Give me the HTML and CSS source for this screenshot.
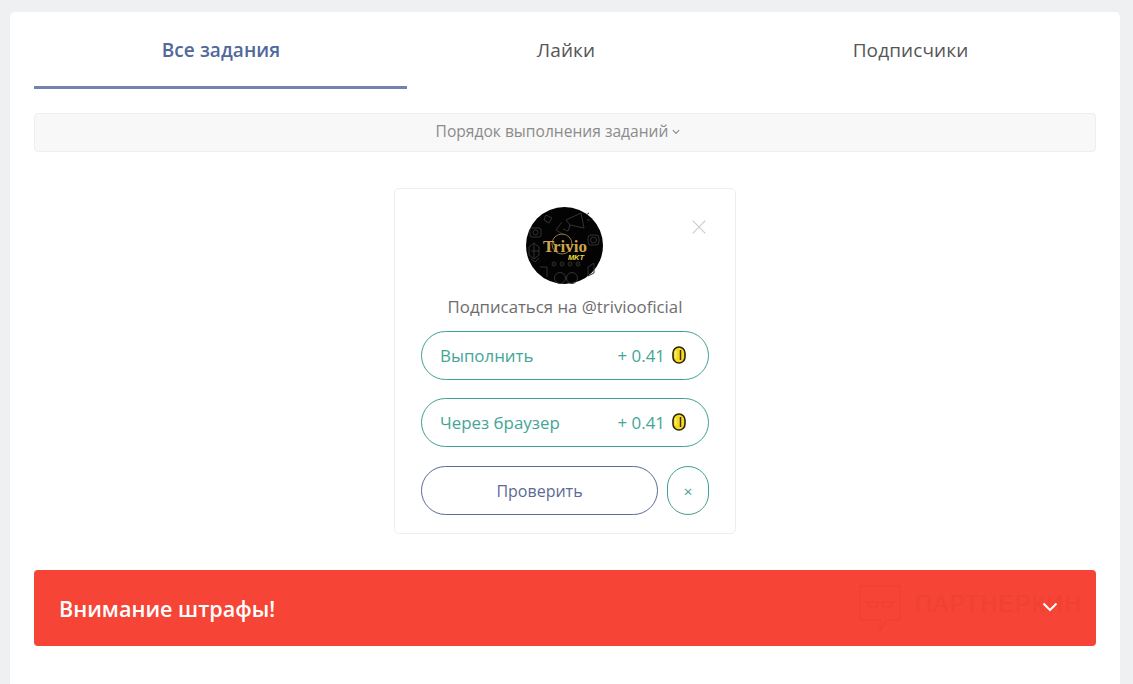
FILE: index.html
```
<!DOCTYPE html>
<html lang="ru">
<head>
<meta charset="utf-8">
<title>Задания</title>
<link rel="stylesheet" href="styles.css">
</head>
<body>
<main class="panel">
  <nav class="tabs">
    <a class="tab tab-active">Все задания</a>
    <a class="tab">Лайки</a>
    <a class="tab">Подписчики</a>
  </nav>
  <div class="order-bar">
    <span>Порядок выполнения заданий</span>
    <svg class="order-chevron" viewBox="0 0 8 6" width="8" height="6"><path d="M.8 1.2 4 4.4l3.2-3.2" fill="none" stroke="#8b8b8b" stroke-width="1.1"/></svg>
  </div>
  <section class="task-wrap">
    <article class="task">
      <button class="task-close" aria-label="Закрыть">
        <svg viewBox="0 0 14 14" width="14" height="14"><path d="M.7.7l12.6 12.6M13.3.7.7 13.3" stroke="#c9cdd0" stroke-width="1.2" fill="none"/></svg>
      </button>
      <svg class="avatar" viewBox="0 0 77 77" width="77" height="77">
        <circle cx="38.5" cy="38.5" r="38.5" fill="#030303"/>
        <g fill="none" stroke="#333" stroke-width="1">
          <path d="M40 13l15-7 3 15-14-3zM44 18l-2 6-5-2M36 15l-6 8 8 5M60 8l3-2M61 13h3"/>
          <rect x="4" y="21" width="11" height="9" rx="2"/>
          <circle cx="9.500" cy="25.500" r="2.500"/>
          <rect x="62" y="28" width="11" height="10" rx="3"/>
          <circle cx="67.500" cy="33" r="3"/>
          <path d="M3 40l5-4 5 4v8l-5 4-5-4zM5 52l4 3 4-4M5 44h8M8 36v16"/>
          <circle cx="34" cy="71" r="5.500"/>
          <circle cx="46" cy="71" r="5.500"/>
          <path d="M14 60h7v10M62 60l6-4v10l-6 3zM20 8l6 3-3 5-5-3z"/>
        </g>
        <circle cx="36" cy="37" r="10" fill="none" stroke="#b6924a" stroke-width=".8"/>
        <text class="avatar-name" x="39" y="45" text-anchor="middle">Trivio</text>
        <text class="avatar-mkt" x="50" y="52.500" text-anchor="middle">MKT</text>
        <g fill="#111" stroke="#444" stroke-width=".6"><circle cx="28" cy="57" r="2"/><circle cx="36" cy="57" r="2"/><circle cx="44" cy="57" r="2"/><circle cx="52" cy="57" r="2"/></g>
      </svg>
      <p class="task-title">Подписаться на @triviooficial</p>
      <a class="action action-teal">
        <span>Выполнить</span>
        <span class="reward">+ 0.41
          <svg class="coin" viewBox="0 0 14 18" width="14" height="18"><rect x="1" y="1" width="12" height="16" rx="6" fill="#f6d921" stroke="#2c2408" stroke-width="1.600"/><path d="M8.500 4v10" stroke="#3a2f08" stroke-width="1.500"/><path d="M3.800 5v7" stroke="#fff4a0" stroke-width="1"/></svg>
        </span>
      </a>
      <a class="action action-teal">
        <span>Через браузер</span>
        <span class="reward">+ 0.41
          <svg class="coin" viewBox="0 0 14 18" width="14" height="18"><rect x="1" y="1" width="12" height="16" rx="6" fill="#f6d921" stroke="#2c2408" stroke-width="1.600"/><path d="M8.500 4v10" stroke="#3a2f08" stroke-width="1.500"/><path d="M3.800 5v7" stroke="#fff4a0" stroke-width="1"/></svg>
        </span>
      </a>
      <div class="check-row">
        <a class="action action-check">Проверить</a>
        <a class="action action-cancel">×</a>
      </div>
    </article>
  </section>
  <section class="alert">
    <h2 class="alert-title">Внимание штрафы!</h2>
    <div class="watermark">
      <svg viewBox="0 0 44 48" width="44" height="48"><path d="M2 1h40v34H28l-6 11v-11H2z" fill="none" stroke="#ef4134" stroke-width="1.500"/><path d="M7 17h30M10 17v3q0 2 3 2h4q3 0 3-2v-3M24 17v3q0 2 3 2h4q3 0 3-2v-3" fill="none" stroke="#ef4134" stroke-width="1.300"/></svg>
      <span class="watermark-text">ПАРТНЕРКИН</span>
    </div>
    <svg class="alert-chevron" viewBox="0 0 16 10" width="16" height="10"><path d="M1.500 1.500 8 8l6.500-6.500" fill="none" stroke="#fff" stroke-width="2"/></svg>
  </section>
</main>
</body>
</html>
```

FILE: styles.css
```
* { box-sizing: border-box; }

html, body { height: 100%; }

body {
  margin: 0;
  padding: 12px 13px 0 10px;
  background: #eff0f2;
  font-family: "Open Sans", "Noto Sans", sans-serif;
  overflow: hidden;
}

.panel {
  background: #fff;
  border-radius: 5px 5px 0 0;
  padding: 0 24px;
  height: 100%;
}

.tabs {
  display: grid;
  grid-template-columns: 373fr 317fr 372fr;
}

.tab {
  height: 77px;
  padding: 24px 0 0 1px;
  text-align: center;
  font-size: 19px;
  line-height: 28px;
  letter-spacing: .1px;
  color: #555;
  border-bottom: 3px solid transparent;
}

.tab-active {
  color: #51689c;
  font-weight: 600;
  letter-spacing: .1px;
  border-bottom-color: #7084b3;
}

.order-bar {
  display: flex;
  justify-content: center;
  align-items: center;
  gap: 4px;
  height: 39px;
  margin-top: 24px;
  padding: 0 14px 3px 0;
  background: #f8f8f8;
  border: 1px solid #eee;
  border-radius: 4px;
  font-size: 15.600px;
  color: #8b8b8b;
}

.order-chevron { margin-top: 2px; }

.task-wrap {
  display: flex;
  justify-content: center;
  margin-top: 36px;
}

.task {
  position: relative;
  width: 342px;
  height: 346px;
  padding: 18px 26px 0;
  border: 1px solid #eeeeee;
  border-radius: 5px;
  display: flex;
  flex-direction: column;
}

.task-close {
  position: absolute;
  top: 31px;
  right: 29px;
  padding: 0;
  border: 0;
  background: none;
  line-height: 0;
}

.avatar { display: block; align-self: center; margin-right: 2px; }

.task-title {
  margin: 12px 0 13px;
  text-align: center;
  font-size: 16.800px;
  line-height: 22px;
  color: #6d6d6d;
}

.action {
  display: flex;
  align-items: center;
  height: 49px;
  border: 1px solid;
  border-radius: 25px;
  font-size: 16.900px;
}

.action-teal {
  justify-content: space-between;
  padding: 0 22px 0 18px;
  margin-bottom: 18px;
  color: #45a598;
  border-color: #3ca193;
}

.reward { display: flex; align-items: center; gap: 7px; }

.coin { display: block; margin-top: -2px; }

.check-row { display: flex; gap: 9px; margin-top: 1px; }

.action-check {
  flex: 1;
  justify-content: center;
  font-size: 16px;
  color: #5b6a96;
  border-color: #5b6a96;
}

.action-cancel {
  flex: 0 0 42px;
  justify-content: center;
  color: #3ca193;
  border-color: #3ca193;
  border-radius: 21px;
  font-size: 15px;
}

.alert {
  position: relative;
  display: flex;
  align-items: center;
  height: 76px;
  margin-top: 36px;
  padding-left: 25px;
  background: #f64436;
  border-radius: 4px;
}

.alert-title {
  margin: 0;
  font-size: 21.600px;
  font-weight: 600;
  color: #fff;
}

.watermark {
  position: absolute;
  left: 824px;
  top: 15px;
  display: flex;
  align-items: flex-start;
  gap: 13px;
}

.watermark-text {
  margin-top: 6px;
  font-family: "Liberation Sans", sans-serif;
  font-size: 23px;
  line-height: 26px;
  letter-spacing: 1.300px;
  color: #ef4134;
}

.alert-chevron {
  position: absolute;
  right: 38px;
  top: 32px;
}

.avatar-name {
  font-family: "Liberation Serif", serif;
  font-size: 17px;
  font-weight: 700;
  fill: #cda550;
}

.avatar-mkt {
  font-family: "Liberation Sans", sans-serif;
  font-size: 7.500px;
  font-weight: 700;
  font-style: italic;
  fill: #e9d838;
}
```
